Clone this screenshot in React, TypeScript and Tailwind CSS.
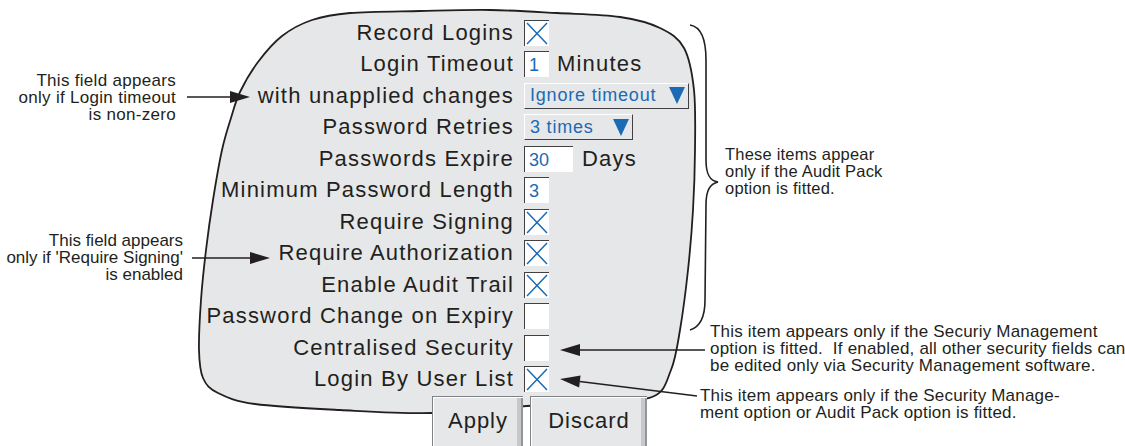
import React from 'react'

const blue = '#1b6ab5'
const ink = '#231f20'

// smooth closed curve through points (catmull-rom -> bezier)
const smoothPath = (pts: number[][]) => {
  const n = pts.length
  let d = `M${pts[0][0]},${pts[0][1]}`
  for (let i = 0; i < n; i++) {
    const p0 = pts[(i - 1 + n) % n]
    const p1 = pts[i]
    const p2 = pts[(i + 1) % n]
    const p3 = pts[(i + 2) % n]
    const c1 = [p1[0] + (p2[0] - p0[0]) / 6, p1[1] + (p2[1] - p0[1]) / 6]
    const c2 = [p2[0] - (p3[0] - p1[0]) / 6, p2[1] - (p3[1] - p1[1]) / 6]
    d += ` C${c1[0]},${c1[1]} ${c2[0]},${c2[1]} ${p2[0]},${p2[1]}`
  }
  return d + ' Z'
}

const blob = [
  [240, 92], [258, 62], [282, 36], [312, 20], [350, 13], [420, 11], [490, 10],
  [557, 13], [620, 17], [660, 28], [684, 48], [694, 90], [695, 150], [693, 210],
  [688, 270], [680, 330], [671, 370], [652, 397], [590, 402], [527, 406],
  [432, 413], [340, 410], [255, 404], [218, 393], [203, 378], [199, 350],
  [201, 300], [206, 250], [213, 200], [222, 150], [231, 118],
]

const Arrow = ({ x1, y1, x2, y2 }: { x1: number; y1: number; x2: number; y2: number }) => {
  // x2,y2 is the tip
  const a = Math.atan2(y2 - y1, x2 - x1)
  const len = 20
  const w = 6
  const bx = x2 - Math.cos(a) * len
  const by = y2 - Math.sin(a) * len
  const px = -Math.sin(a) * w
  const py = Math.cos(a) * w
  return (
    <g>
      <line x1={x1} y1={y1} x2={bx} y2={by} stroke={ink} strokeWidth="1.6" />
      <polygon points={`${x2},${y2} ${bx + px},${by + py} ${bx - px},${by - py}`} fill={ink} />
    </g>
  )
}

const Drawing = () => (
  <svg className="absolute inset-0" width="1125" height="446" viewBox="0 0 1125 446">
    <path d={smoothPath(blob)} fill="#e6e7e8" stroke={ink} strokeWidth="1.8" />
    {/* brace */}
    <path
      d="M690,25 C702,27 706,40 706,60 L706,160 C706,175 710,181 718,182 C710,184 706,190 706,205 L705,300 C705,318 700,327 690,330"
      fill="none"
      stroke={ink}
      strokeWidth="1.6"
    />
    <Arrow x1={187} y1={97} x2={250} y2={97} />
    <Arrow x1={192} y1={258} x2={270} y2={258} />
    <Arrow x1={705} y1={350} x2={560} y2={350} />
    <Arrow x1={697} y1={396} x2={560} y2={379} />
  </svg>
)

const Check = ({ on }: { on?: boolean }) => (
  <div className="w-[25px] h-[26px] bg-white border-l border-t border-[#414042]">
    {on && (
      <svg width="24" height="25" viewBox="0 0 24 25">
        <path d="M2 2 L22 23 M22 2 L2 23" stroke={blue} strokeWidth="1.5" />
      </svg>
    )}
  </div>
)

const Field = ({ value, w }: { value: string; w: string }) => (
  <div className={`${w} h-[26px] bg-white border-l border-t border-[#414042] pl-[4px] text-[18px] leading-[26px] text-[#1b6ab5]`}>
    {value}
  </div>
)

const Tri = () => (
  <svg width="16" height="17" viewBox="0 0 16 17">
    <polygon points="0,0 16,0 8,17" fill={blue} />
  </svg>
)

const Select = ({ value, w }: { value: string; w: string }) => (
  <div className={`${w} h-[26px] flex items-center justify-between bg-[#e6e7e8] border border-white border-r-[#414042] border-b-[#414042] pl-[5px] pr-[3px] text-[18px] tracking-[0.8px] text-[#1b6ab5]`}>
    <span>{value}</span>
    <Tri />
  </div>
)

const Row = ({ label, children }: { label: string; children: React.ReactNode }) => (
  <div className="flex items-center h-[31.5px]">
    <div className="w-[340px] pr-[10px] text-right text-[22px] tracking-[1.2px] leading-none whitespace-nowrap">
      {label}
    </div>
    {children}
  </div>
)

const Unit = ({ text, ml }: { text: string; ml: string }) => (
  <span className={`${ml} text-[22px] tracking-[1.2px] leading-none`}>{text}</span>
)

const Button = ({ text, w }: { text: string; w: string }) => (
  <div className={`${w} h-[60px] bg-[#e6e7e8] border-l border-t border-[#808285] shadow-[inset_1px_1px_0_#fff,inset_-2px_0_0_#939598,inset_-6px_0_0_#c7c8ca] pt-[10px] text-center text-[22px] tracking-[1px] leading-[28px]`}>
    {text}
  </div>
)

export default function App() {
  return (
    <div className="relative w-[1125px] h-[446px] overflow-hidden bg-white font-['Liberation_Sans',Arial,sans-serif] text-[#231f20]">
      <Drawing />

      {/* form */}
      <div className="relative flex flex-col pt-[17px] pl-[184px]">
        <Row label="Record Logins"><Check on /></Row>
        <Row label="Login Timeout">
          <Field value="1" w="w-[25px]" />
          <Unit text="Minutes" ml="ml-[8px]" />
        </Row>
        <Row label="with unapplied changes"><Select value="Ignore timeout" w="w-[165px]" /></Row>
        <Row label="Password Retries"><Select value="3 times" w="w-[109px]" /></Row>
        <Row label="Passwords Expire">
          <Field value="30" w="w-[49px]" />
          <Unit text="Days" ml="ml-[9px]" />
        </Row>
        <Row label="Minimum Password Length"><Field value="3" w="w-[25px]" /></Row>
        <Row label="Require Signing"><Check on /></Row>
        <Row label="Require Authorization"><Check on /></Row>
        <Row label="Enable Audit Trail"><Check on /></Row>
        <Row label="Password Change on Expiry"><Check /></Row>
        <Row label="Centralised Security"><Check /></Row>
        <Row label="Login By User List"><Check on /></Row>
        <div className="flex gap-[7px] ml-[248px] mt-[1px]">
          <Button text="Apply" w="w-[91px]" />
          <Button text="Discard" w="w-[117px]" />
        </div>
      </div>

      {/* callouts */}
      <div className="absolute left-0 top-[72px] w-[176px] text-right text-[17px] leading-[17px] tracking-[0.3px] whitespace-nowrap">
        This field appears<br />only if Login timeout<br />is non-zero
      </div>
      <div className="absolute left-0 top-[232px] w-[183px] text-right text-[17px] leading-[17px] whitespace-nowrap">
        This field appears<br />only if 'Require Signing'<br />is enabled
      </div>
      <div className="absolute left-[725px] top-[146px] text-[16.5px] leading-[17px] tracking-[0.2px] whitespace-nowrap">
        These items appear<br />only if the Audit Pack<br />option is fitted.
      </div>
      <div className="absolute left-[710px] top-[323px] text-[17px] leading-[17px] tracking-[0.2px] whitespace-pre">
        {'This item appears only if the Securiy Management\noption is fitted.  If enabled, all other security fields can\nbe edited only via Security Management software.'}
      </div>
      <div className="absolute left-[700px] top-[388px] text-[17px] leading-[16.5px] tracking-[0.2px] whitespace-pre">
        {'This item appears only if the Security Manage-\nment option or Audit Pack option is fitted.'}
      </div>
    </div>
  )
}
